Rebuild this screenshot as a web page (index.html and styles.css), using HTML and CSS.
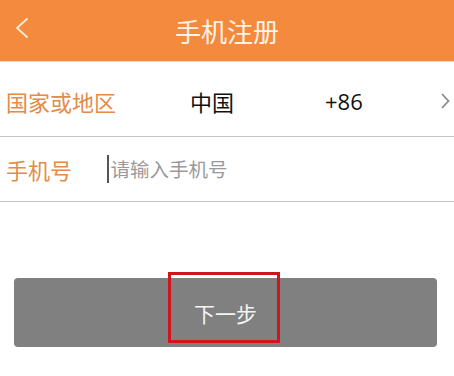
FILE: index.html
```html
<!DOCTYPE html>
<html lang="zh-CN">
<head>
    <meta charset="UTF-8">
    <meta name="viewport" content="width=device-width, initial-scale=1.0">
    <title>手机注册</title>
    <link rel="stylesheet" href="styles.css">
</head>
<body>
    <header class="topbar">
        <span class="back">
            <svg width="14" height="22" viewBox="0 0 14 22">
                <path d="M12.5 1.5 L2 11 L12.5 20.5" fill="none" stroke="#fdecd9" stroke-width="1.8"/>
            </svg>
        </span>
        <h1 class="title">手机注册</h1>
    </header>

    <div class="row row-country">
        <span class="label">国家或地区</span>
        <span class="country">中国</span>
        <span class="code">+86</span>
        <span class="arrow">
            <svg width="9" height="16" viewBox="0 0 9 16">
                <path d="M1 1 L7.5 8 L1 15" fill="none" stroke="#8a8a8a" stroke-width="1.8"/>
            </svg>
        </span>
    </div>

    <div class="row row-phone">
        <span class="label">手机号</span>
        <span class="field">
            <span class="caret"></span>
            <span class="placeholder">请输入手机号</span>
        </span>
    </div>

    <div class="actions">
        <button class="next">下一步</button>
        <span class="mark"></span>
    </div>
</body>
</html>
```

FILE: styles.css
```css
body {
    margin: 0;
    background: #fff;
    font-family: "Noto Sans CJK SC", "Noto Sans", sans-serif;
}

.topbar {
    position: relative;
    height: 61px;
    background: #f38a3d;
    border-bottom: 1px solid #fad5b8;
    display: flex;
    align-items: center;
    justify-content: center;
}

.back {
    position: absolute;
    left: 15px;
    top: 17px;
    display: block;
    line-height: 0;
}

.title {
    margin: 0;
    font-size: 26px;
    font-weight: 400;
    line-height: 30px;
    color: #fff4e6;
    letter-spacing: 0;
}

.row {
    display: flex;
    align-items: center;
    border-bottom: 1.5px solid #c4c4c4;
    box-sizing: border-box;
}

.row-country {
    height: 75px;
    padding-top: 4px;
}

.row-phone {
    height: 65px;
}

.label {
    padding-left: 6px;
    font-size: 22px;
    line-height: 28px;
    color: #e38b48;
}

.row-country .label {
    width: 184px;
}

.country {
    width: 135px;
    font-size: 22px;
    line-height: 28px;
    color: #111;
}

.code {
    width: 116px;
    font-family: "Open Sans", "Noto Sans", sans-serif;
    font-size: 22px;
    line-height: 28px;
    color: #111;
}

.arrow {
    line-height: 0;
}

.row-phone .label {
    width: 101px;
}

.field {
    display: flex;
    align-items: center;
}

.caret {
    display: block;
    width: 1.5px;
    height: 28px;
    background: #555;
    margin-right: 2px;
}

.placeholder {
    font-size: 19.5px;
    line-height: 26px;
    color: #9a9a9a;
}

.actions {
    position: relative;
    margin: 76px 17px 0 14px;
}

.next {
    display: block;
    width: 100%;
    height: 69px;
    border: none;
    border-radius: 4px;
    background: #808080;
    color: #f4f4f4;
    font-family: "Noto Sans CJK SC", "Noto Sans", sans-serif;
    font-size: 21px;
    padding: 0;
}

.mark {
    position: absolute;
    left: 154px;
    top: -6px;
    width: 112px;
    height: 71px;
    box-sizing: border-box;
    border: 3px solid #d0161a;
}
```
